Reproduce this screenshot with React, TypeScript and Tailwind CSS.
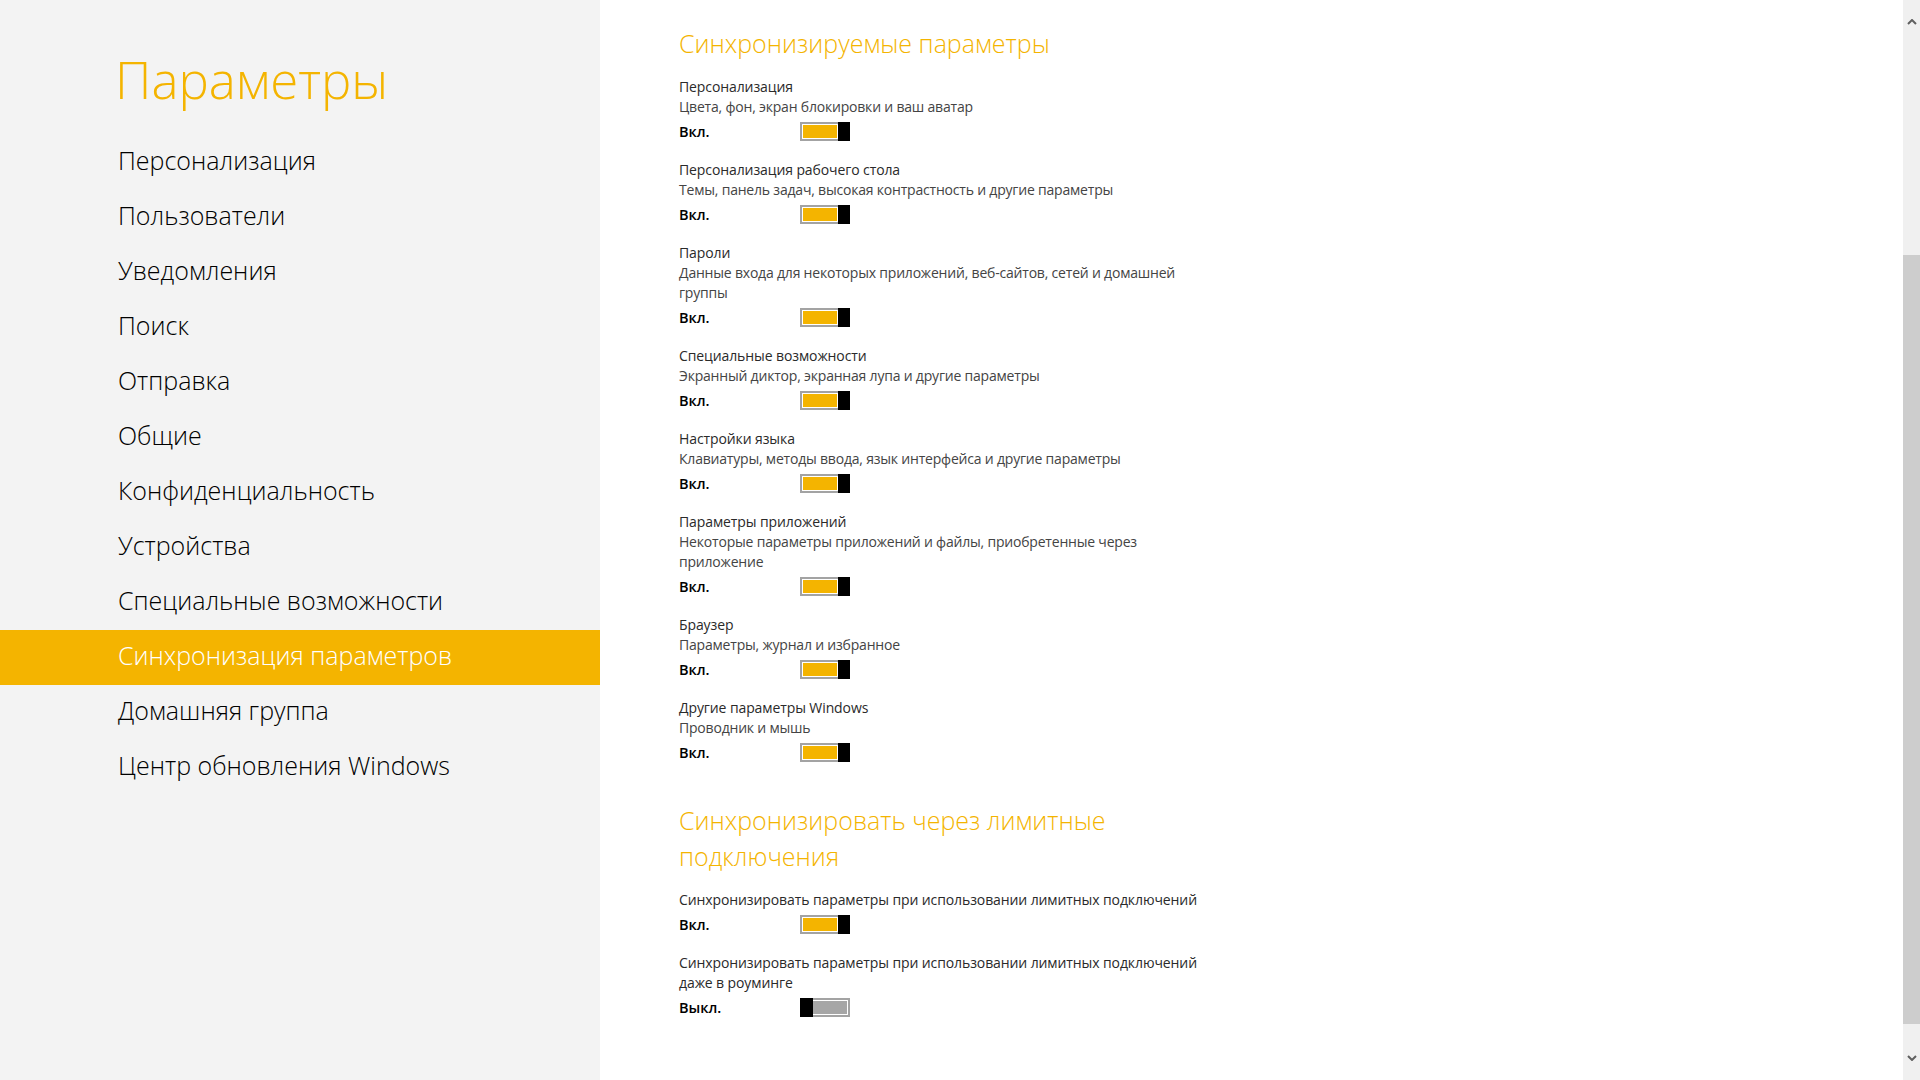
import React from "react";

const NAV = [
  "Персонализация",
  "Пользователи",
  "Уведомления",
  "Поиск",
  "Отправка",
  "Общие",
  "Конфиденциальность",
  "Устройства",
  "Специальные возможности",
  "Синхронизация параметров",
  "Домашняя группа",
  "Центр обновления Windows",
];

type SyncItem = { title: string[]; desc?: string[]; on: boolean };

const SYNCED: SyncItem[] = [
  { title: ["Персонализация"], desc: ["Цвета, фон, экран блокировки и ваш аватар"], on: true },
  {
    title: ["Персонализация рабочего стола"],
    desc: ["Темы, панель задач, высокая контрастность и другие параметры"],
    on: true,
  },
  {
    title: ["Пароли"],
    desc: ["Данные входа для некоторых приложений, веб-сайтов, сетей и домашней", "группы"],
    on: true,
  },
  {
    title: ["Специальные возможности"],
    desc: ["Экранный диктор, экранная лупа и другие параметры"],
    on: true,
  },
  {
    title: ["Настройки языка"],
    desc: ["Клавиатуры, методы ввода, язык интерфейса и другие параметры"],
    on: true,
  },
  {
    title: ["Параметры приложений"],
    desc: ["Некоторые параметры приложений и файлы, приобретенные через", "приложение"],
    on: true,
  },
  { title: ["Браузер"], desc: ["Параметры, журнал и избранное"], on: true },
  { title: ["Другие параметры Windows"], desc: ["Проводник и мышь"], on: true },
];

const METERED: SyncItem[] = [
  { title: ["Синхронизировать параметры при использовании лимитных подключений"], on: true },
  {
    title: ["Синхронизировать параметры при использовании лимитных подключений", "даже в роуминге"],
    on: false,
  },
];

function Toggle({ on }: { on: boolean }) {
  if (on) {
    return (
      <div className="flex w-[50px] h-[19px]">
        <div className="flex-1 border-2 border-r-0 border-[#a3a3a3] bg-white p-px">
          <div className="h-full bg-[#f4b400]" />
        </div>
        <div className="w-[12px] bg-black" />
      </div>
    );
  }
  return (
    <div className="flex w-[50px] h-[19px]">
      <div className="w-[13px] bg-black" />
      <div className="flex-1 border-2 border-l-0 border-[#a3a3a3] bg-white p-px pl-0">
        <div className="h-full bg-[#a6a6a6]" />
      </div>
    </div>
  );
}

function Item({ item }: { item: SyncItem }) {
  return (
    <div className="mb-[19px]">
      {item.title.map((t) => (
        <div
          key={t}
          className="h-[20px] leading-[20px] text-[14px] tracking-[-0.1px] text-[#2a2a2a] whitespace-nowrap"
        >
          {t}
        </div>
      ))}
      {item.desc?.map((d) => (
        <div
          key={d}
          className="h-[20px] leading-[20px] text-[14px] tracking-[-0.2px] text-[#444444] whitespace-nowrap"
        >
          {d}
        </div>
      ))}
      <div className="mt-[5px] flex h-[19px] items-center">
        <span className="w-[121px] text-[14.5px] font-semibold text-black">{item.on ? "Вкл." : "Выкл."}</span>
        <Toggle on={item.on} />
      </div>
    </div>
  );
}

function Chevron({ up }: { up: boolean }) {
  return (
    <svg width="10" height="6" viewBox="0 0 10 6" fill="none">
      <path d={up ? "M1 5 L5 1 L9 5" : "M1 1 L5 5 L9 1"} stroke="#606060" strokeWidth="2" />
    </svg>
  );
}

export default function App() {
  return (
    <div className="flex h-[1080px] w-[1920px] overflow-hidden bg-white font-['Open_Sans','Noto_Sans',sans-serif]">
      <aside className="w-[600px] shrink-0 bg-[#f3f3f3]">
        <div className="h-[135px] pl-[115px] pt-[47px]">
          <h1 className="text-[51px] font-light leading-[64px] text-[#f4b400]">Параметры</h1>
        </div>
        <nav>
          {NAV.map((n) => (
            <div
              key={n}
              className={
                n === "Синхронизация параметров"
                  ? "flex h-[55px] items-center bg-[#f4b400] pb-[3px] pl-[118px] text-[25px] font-light text-white"
                  : "flex h-[55px] items-center pb-[3px] pl-[118px] text-[25px] font-light text-black"
              }
            >
              {n}
            </div>
          ))}
        </nav>
      </aside>

      <main className="flex-1 pl-[79px] pt-[25px]">
        <h2 className="text-[25px] font-light leading-[36px] text-[#f4b400]">Синхронизируемые параметры</h2>
        <div className="mt-[16px]">
          {SYNCED.map((it) => (
            <Item key={it.title[0]} item={it} />
          ))}
        </div>
        <h2 className="mt-[40px] text-[25px] font-light leading-[36px] text-[#f4b400]">
          <div>Синхронизировать через лимитные</div>
          <div>подключения</div>
        </h2>
        <div className="mt-[16px]">
          {METERED.map((it, i) => (
            <Item key={i} item={it} />
          ))}
        </div>
      </main>

      <div className="flex w-[17px] shrink-0 flex-col bg-[#f0f0f0]">
        <div className="flex h-[44px] items-center justify-center">
          <Chevron up />
        </div>
        <div className="h-[211px]" />
        <div className="h-[769px] bg-[#cdcdcd]" />
        <div className="flex-1" />
        <div className="flex h-[44px] items-center justify-center">
          <Chevron up={false} />
        </div>
      </div>
    </div>
  );
}
